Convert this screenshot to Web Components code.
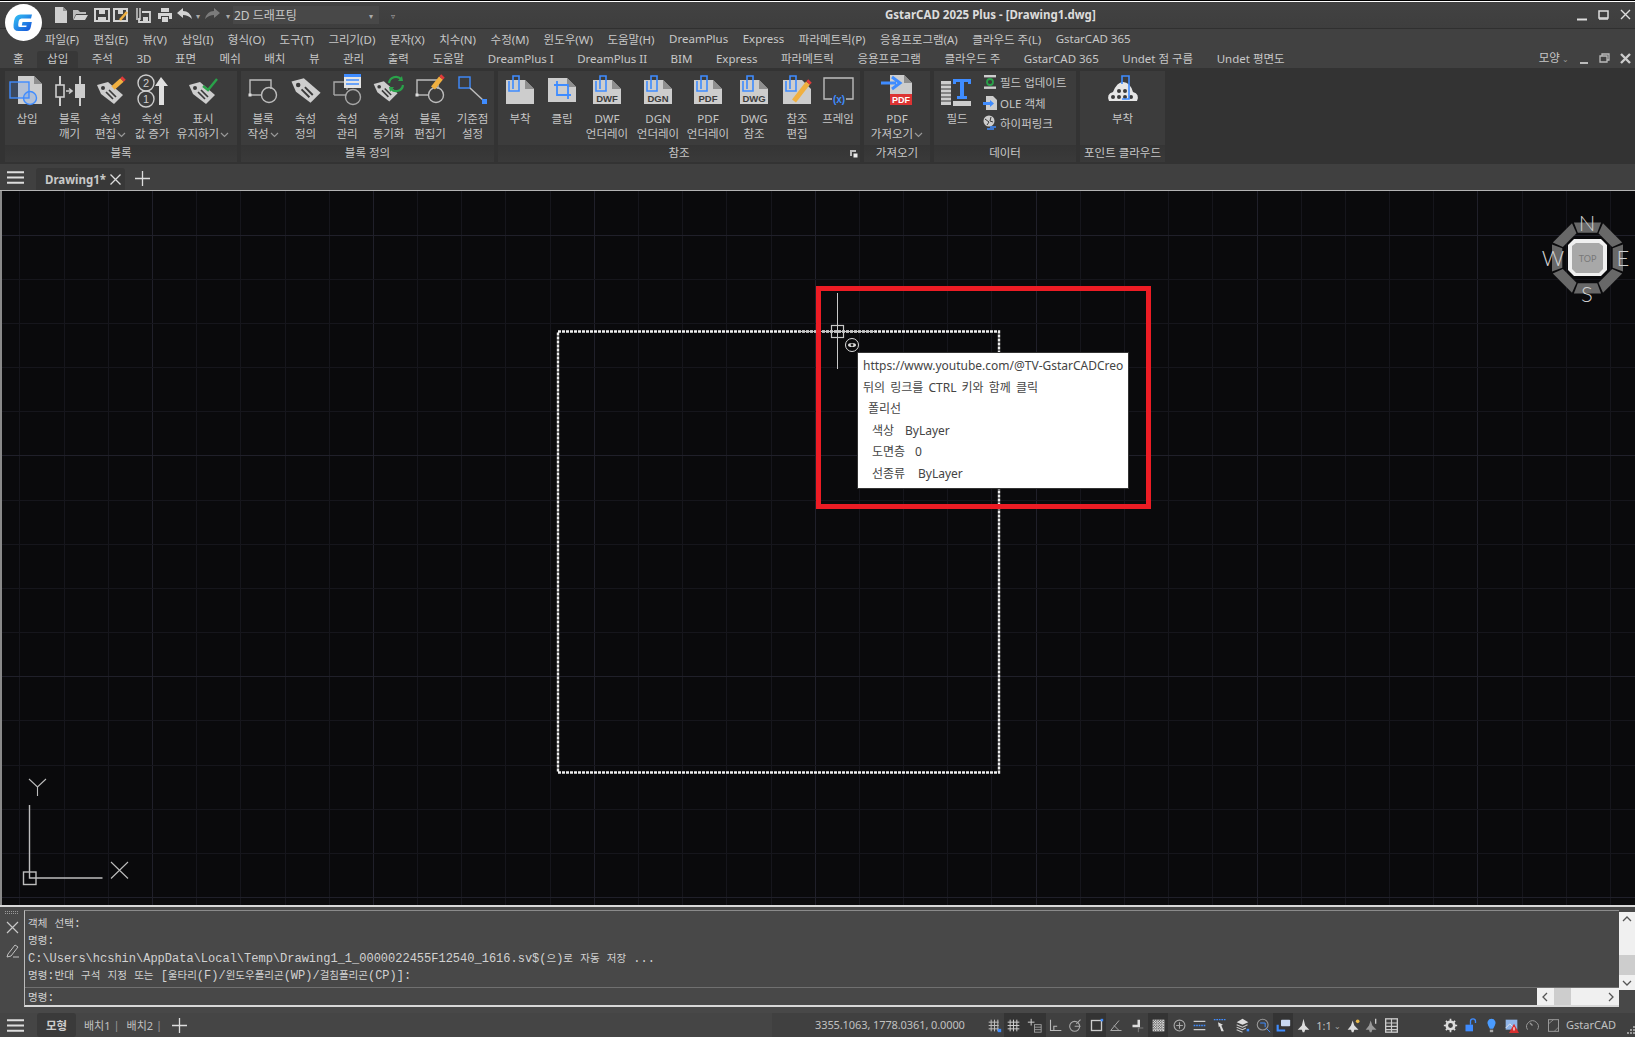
<!DOCTYPE html>
<html lang="ko">
<head>
<meta charset="utf-8">
<title>GstarCAD 2025 Plus</title>
<style>
html, body { margin: 0; height: 100%; background: #333; overflow: hidden; }
body { font: 12px "Noto Sans", "Noto Sans CJK KR", sans-serif; color: #c8c8c8; }
</style>
</head>
<body>
<cad-app>
  <cad-titlebar></cad-titlebar>
  <cad-menubar></cad-menubar>
  <cad-tabstrip></cad-tabstrip>
  <cad-ribbon>
    <rb-panel label="블록" w="232">
      <rb-tool icon="insert" w="44">삽입</rb-tool>
      <rb-tool icon="explode" w="41">블록<br>깨기</rb-tool>
      <rb-tool icon="tagpen" w="41" menu>속성<br>편집</rb-tool>
      <rb-tool icon="seq" w="42">속성<br>값 증가</rb-tool>
      <rb-tool icon="tagcheck" w="60" menu>표시<br>유지하기</rb-tool>
    </rb-panel>
    <rb-panel label="블록 정의" w="253">
      <rb-tool icon="block" w="44" menu>블록<br>작성</rb-tool>
      <rb-tool icon="tag" w="41">속성<br>정의</rb-tool>
      <rb-tool icon="attman" w="42">속성<br>관리</rb-tool>
      <rb-tool icon="tagsync" w="41">속성<br>동기화</rb-tool>
      <rb-tool icon="blockedit" w="42">블록<br>편집기</rb-tool>
      <rb-tool icon="base" w="43">기준점<br>설정</rb-tool>
    </rb-panel>
    <rb-panel label="참조" w="362" launcher>
      <rb-tool icon="attach" w="44">부착</rb-tool>
      <rb-tool icon="clip" w="40">클립</rb-tool>
      <rb-tool icon="dwf" w="50">DWF<br>언더레이</rb-tool>
      <rb-tool icon="dgn" w="52">DGN<br>언더레이</rb-tool>
      <rb-tool icon="pdfu" w="48">PDF<br>언더레이</rb-tool>
      <rb-tool icon="dwg" w="44">DWG<br>참조</rb-tool>
      <rb-tool icon="refedit" w="42">참조<br>편집</rb-tool>
      <rb-tool icon="frame" w="40">프레임</rb-tool>
    </rb-panel>
    <rb-panel label="가져오기" w="66">
      <rb-tool icon="pdfin" w="66" menu>PDF<br>가져오기</rb-tool>
    </rb-panel>
    <rb-panel label="데이터" w="142">
      <rb-tool icon="field" w="46">필드</rb-tool>
      <rb-stack>
        <rb-small icon="fieldup">필드 업데이트</rb-small>
        <rb-small icon="ole">OLE 객체</rb-small>
        <rb-small icon="link">하이퍼링크</rb-small>
      </rb-stack>
    </rb-panel>
    <rb-panel label="포인트 클라우드" w="85">
      <rb-tool icon="cloud" w="85">부착</rb-tool>
    </rb-panel>
  </cad-ribbon>
  <cad-docbar></cad-docbar>
  <cad-canvas>
    <cad-tooltip></cad-tooltip>
  </cad-canvas>
  <cad-command></cad-command>
  <cad-status></cad-status>
</cad-app>

<script>
const G = '#cdcdcd', B = '#3f8cff', D = '#3a3a3a'

// 리본 아이콘 조각
const page = `<path d="M4 8H23L32 17V32H4Z" fill="${G}"/><path d="M23 8V17H32Z" fill="#8f8f8f"/>`
const clip = `<path d="M11 17V4H17V19H7V9" fill="none" stroke="${B}" stroke-width="1.6"/>`
const tag = (sx = 1) => `<g transform="scale(${sx})"><path d="M4 13L15 10L30 23L21 32L8 22Z" fill="${G}"/><circle cx="10" cy="16" r="2" fill="${D}"/><path d="M13 20L20 27M16 18L23 25" stroke="${D}" stroke-width="1.7"/></g>`
const pencil = (x1, y1, x2, y2) => `<path d="M${x1} ${y1}L${x2} ${y2}" stroke="#f0b040" stroke-width="5"/><path d="M${x2} ${y2}l2 -2" stroke="#e03a3a" stroke-width="5"/>`
const docLabel = t => `<text x="18" y="29.5" font-size="${t.length > 3 ? 8 : 9.5}" font-weight="700" font-family="Liberation Sans" fill="#3c3c3c" text-anchor="middle">${t}</text>`
const blockShape = `<path d="M5 23V8H26V17" fill="none" stroke="#bdbdbd" stroke-width="1.4"/><path d="M5 23H17" stroke="#bdbdbd" stroke-width="1.4"/><circle cx="24" cy="23" r="7.5" fill="none" stroke="#bdbdbd" stroke-width="1.4"/><rect x="3.5" y="21.5" width="3" height="3" fill="#ddd"/>`

const ICON = {
  insert: `<path d="M9 4H25L33 12V32H9Z" fill="${G}"/><path d="M25 4V12H33Z" fill="#8f8f8f"/><rect x="1" y="10" width="19" height="16" fill="#3f8cff30" stroke="${B}" stroke-width="1.4"/><circle cx="21" cy="26" r="6.5" fill="#3f8cff30" stroke="${B}" stroke-width="1.4"/>`,
  explode: `<path d="M8 4V34M28 4V34" stroke="${G}" stroke-width="2"/><rect x="4" y="13" width="8" height="12" fill="#3a3a3a" stroke="${G}" stroke-width="1.6"/><rect x="23" y="12" width="10" height="14" fill="${G}"/><path d="M14 19H19M17 16.5L20 19L17 21.5" fill="none" stroke="${G}" stroke-width="1.6"/>`,
  tagpen: tag() + pencil(20, 16, 29, 8),
  seq: `<circle cx="12" cy="11" r="8" fill="none" stroke="${G}" stroke-width="1.4"/><circle cx="12" cy="27" r="8" fill="none" stroke="${G}" stroke-width="1.4"/><text x="12" y="15" font-size="11" font-family="Liberation Sans" fill="${G}" text-anchor="middle">2</text><text x="12" y="31" font-size="11" font-family="Liberation Sans" fill="${G}" text-anchor="middle">1</text><path d="M27 5L34 14H30V33H25V14H21Z" fill="#e0e0e0"/>`,
  tagcheck: tag() + `<path d="M18 14L23 18L32 7" fill="none" stroke="#2aa24a" stroke-width="2.4"/>`,
  block: blockShape,
  tag: `<g transform="translate(-1 -5) scale(1.12)">${tag()}</g>`,
  attman: `<path d="M5 23V10H18M18 18V15" fill="none" stroke="#a8a8a8" stroke-width="1.4"/><path d="M5 23H17" stroke="#a8a8a8" stroke-width="1.4"/><circle cx="24" cy="25" r="7.5" fill="none" stroke="#a8a8a8" stroke-width="1.4"/><rect x="15" y="2" width="17" height="14" fill="#e4e4e4"/><rect x="15" y="2" width="17" height="3" fill="${B}"/><path d="M17 8H30M17 12H30" stroke="${B}" stroke-width="1.4"/>`,
  tagsync: `<g transform="translate(-1 0) scale(.92)">${tag()}</g><path d="M18 11A7 7 0 0 1 30 7M32 13A7 7 0 0 1 20 17" fill="none" stroke="#2aa24a" stroke-width="2.2"/><path d="M27 9L32 9L31 4ZM23 15L18 15L19 20Z" fill="#2aa24a"/>`,
  blockedit: blockShape + pencil(21, 16, 29, 6),
  base: `<rect x="4" y="5" width="11" height="11" fill="none" stroke="${B}" stroke-width="1.4"/><path d="M15 16L29 29" stroke="#bdbdbd" stroke-width="1.5"/><rect x="27" y="27" width="5" height="5" fill="${B}"/>`,
  attach: page + clip,
  clip: `<path d="M4 6H23L32 15V30H4Z" fill="${G}"/><path d="M23 6V15H32Z" fill="#8f8f8f"/><path d="M10 13H24V27M13 9V23H27" fill="none" stroke="${B}" stroke-width="1.8"/>`,
  dwf: page + clip + docLabel('DWF'),
  dgn: page + clip + docLabel('DGN'),
  pdfu: page + clip + docLabel('PDF'),
  dwg: page + clip + docLabel('DWG'),
  refedit: page.replace('M23 8V17H32Z', 'M23 8V8Z') + clip + pencil(15, 29, 29, 11),
  frame: `<path d="M12 27H4V6H33V27H26" fill="none" stroke="#bdbdbd" stroke-width="1.4"/><text x="19" y="31" font-size="10" font-weight="700" font-family="Liberation Sans" fill="${B}" text-anchor="middle">(x)</text>`,
  pdfin: `<path d="M11 3H25L33 11V33H11Z" fill="${G}"/><path d="M25 3V11H33Z" fill="#8f8f8f"/><rect x="11" y="22" width="22" height="11" fill="#dd3333"/><text x="22" y="31" font-size="9" font-weight="700" font-family="Liberation Sans" fill="#fff" text-anchor="middle">PDF</text><path d="M2 11H17M13 5L21 11L13 17" fill="none" stroke="${B}" stroke-width="3"/>`,
  field: `<rect x="2" y="9" width="10" height="24" fill="${G}"/><path d="M2 13H12M2 17H12M2 21H12M2 25H12M2 29H12" stroke="${D}" stroke-width="1"/><path d="M14 7H32V12H29V10H25V24H28V27H18V24H21V10H17V12H14Z" fill="${B}"/><rect x="14" y="29" width="18" height="5" fill="${G}"/>`,
  cloud: `<path d="M4 29Q1 22 8 20Q12 10 18 10Q25 10 28 20Q35 22 32 29Z" fill="#e6e6e6"/><g fill="#3a3a3a"><circle cx="8" cy="25" r="2"/><circle cx="14" cy="25" r="2"/><circle cx="20" cy="25" r="2"/><circle cx="26" cy="25" r="2"/><circle cx="14" cy="19" r="2"/><circle cx="20" cy="19" r="2"/></g><path d="M17 12V4H24V27H17" fill="none" stroke="${B}" stroke-width="1.6"/>`,
  // 작은 아이콘 (16)
  fieldup: `<rect x="2" y="1" width="12" height="2.4" fill="${G}"/><rect x="2" y="12.5" width="12" height="2.4" fill="${G}"/><circle cx="8" cy="8" r="3" fill="none" stroke="#2aa24a" stroke-width="1.8"/>`,
  ole: `<path d="M4 1H11L15 5V15H4Z" fill="${G}"/><path d="M1 7H8V5L12 8.5L8 12V10H1Z" fill="${B}"/>`,
  link: `<circle cx="7" cy="6" r="5.5" fill="${G}"/><path d="M3 4L7 7L5 10M9 2L8 6L11 7" stroke="${D}" fill="none"/><path d="M5 14H12M8 12H14" stroke="${B}" stroke-width="1.4"/>`,
  // 빠른 실행 도구모음 (16)
  qnew: `<path d="M2 0H10L14 4V16H2Z" fill="#cfcfcf"/><path d="M10 0V4H14Z" fill="#8f8f8f"/>`,
  qopen: `<path d="M1 3H6L8 5H14V7H4L1 13Z" fill="#bdbdbd"/><path d="M4 8H16L13 13H1.5Z" fill="#d4d4d4"/>`,
  qsave: `<path d="M1 2H15V14H1Z" fill="none" stroke="#d4d4d4" stroke-width="2"/><path d="M5 2V7H11V2M4 14V10H12V14" fill="#d4d4d4"/>`,
  qsaveas: `<path d="M1 2H14V14H1Z" fill="none" stroke="#d4d4d4" stroke-width="2"/><path d="M5 2V7H10V2" fill="#d4d4d4"/><path d="M7 13L14 5" stroke="#f0b040" stroke-width="2.6"/>`,
  qsaveall: `<path d="M2 1V13M5 1V13" stroke="#d4d4d4" stroke-width="1.4"/><path d="M7 5H15V15H4V11" fill="none" stroke="#d4d4d4" stroke-width="1.8"/><path d="M8 10H13V15H8Z" fill="#d4d4d4"/>`,
  qprint: `<path d="M4 1H12V5H4Z" fill="#d4d4d4"/><path d="M1 6H15V12H12V9H4V12H1Z" fill="#d4d4d4"/><path d="M5 10H11V15H5Z" fill="#d4d4d4"/>`,
  qundo: `<path d="M1 6L7 1V4Q14 4 16 12Q12 8 7 8V11Z" fill="#d4d4d4"/>`,
  qredo: `<path d="M15 6L9 1V4Q2 4 0 12Q4 8 9 8V11Z" fill="#7b7b7b"/>`,
  // 상태 표시줄 (18)
  sgridsnap: `<path d="M2 5H14M2 9H14M2 13H14M5 2V16M9 2V16M13 2V16" stroke="#bbb" stroke-width="1.2"/><rect x="13" y="13" width="4" height="4" fill="${B}"/>`,
  sgrid: `<path d="M2 5H16M2 9H16M2 13H16M5 2V16M9 2V16M13 2V16" stroke="#ccc" stroke-width="1.2"/>`,
  sinfer: `<path d="M1 5H9M5 1V9" stroke="#ccc" stroke-width="1.2"/><rect x="9" y="8" width="8" height="9" fill="none" stroke="#aaa"/><path d="M9 11H17M9 14H17" stroke="#aaa"/>`,
  sortho: `<path d="M3 2V15H16M7 15V10H11" fill="none" stroke="#bbb" stroke-width="1.3"/>`,
  spolar: `<circle cx="8" cy="10" r="6" fill="none" stroke="#aaa" stroke-width="1.3"/><path d="M8 10H15M10 7L15 2" stroke="#aaa" stroke-width="1.3"/>`,
  sosnap: `<rect x="3" y="3" width="12" height="12" fill="none" stroke="#ccc" stroke-width="1.6"/><rect x="14" y="1" width="3" height="3" fill="${B}"/>`,
  sotrack: `<path d="M2 15H15M2 15L12 3M6 9L12 15" stroke="#aaa" stroke-width="1.2" fill="none"/>`,
  sdyn: `<path d="M3 8H9V2H12V11H3Z" fill="#ddd"/><path d="M10 17V12H16" fill="none" stroke="#888"/>`,
  strans: `<rect x="2" y="2" width="14" height="14" fill="#ddd"/><path d="M2 4H16M2 7H16M2 10H16M2 13H16M4 2V16M7 2V16M10 2V16M13 2V16" stroke="#333" stroke-dasharray="1.5 1.5"/>`,
  sqp: `<circle cx="9" cy="9" r="6.5" fill="none" stroke="#aaa" stroke-width="1.3"/><path d="M5 9H13M9 5V13" stroke="#aaa" stroke-width="1.3" transform="rotate(0 9 9)"/>`,
  slw: `<path d="M2 4H16M2 14H16" stroke="#ccc" stroke-width="1.6"/><path d="M2 9H16" stroke="${B}" stroke-width="1.6" stroke-dasharray="2 1"/>`,
  ssel: `<path d="M1 2H16" stroke="${B}" stroke-width="1.4" stroke-dasharray="2 1"/><path d="M6 5L12 8L10 9L13 16L10 16L8 10L7 11Z" fill="#ddd"/>`,
  slay: `<path d="M9 1L16 5L9 8L2 5Z" fill="#ddd"/><path d="M2 8L9 11L15 8M2 11L9 14L13 12M2 14L9 17" fill="none" stroke="#ccc" stroke-width="1.3"/><rect x="14" y="13" width="3" height="3" fill="${B}"/>`,
  szoom: `<circle cx="8" cy="8" r="6.5" fill="none" stroke="#999" stroke-width="1.3"/><path d="M5 6H11V11M13 13L17 17" stroke="${B}" fill="none" stroke-width="1.2"/>`,
  swin: `<rect x="6" y="2" width="11" height="8" rx="1" fill="#c8d8f0"/><path d="M2 8V15H11" fill="none" stroke="${B}" stroke-width="2.6"/>`,
  sann: `<path d="M9 1L11 9L16 14H11L10 17H8L7 14H2L7 9Z" fill="#ddd"/>`,
  sann2: `<path d="M8 3L10 9L15 14H10L9 17H7L6 14H2L6 9Z" fill="#ddd"/><circle cx="14" cy="4" r="2.2" fill="#e8b84a"/>`,
  sann3: `<path d="M8 3L10 9L15 14H10L9 17H7L6 14H2L6 9Z" fill="#999"/><path d="M14 1V7" stroke="#ccc" stroke-width="1.6"/>`,
  stable: `<rect x="2" y="1" width="14" height="16" fill="none" stroke="#ccc" stroke-width="1.6"/><path d="M2 6H16M2 10H16M2 14H16M9 1V17" stroke="#ccc" stroke-width="1.4"/>`,
  sgear: `<circle cx="9" cy="9" r="4.5" fill="none" stroke="#ddd" stroke-width="3.2"/><path d="M9 1V4M9 14V17M1 9H4M14 9H17M3.5 3.5L5.5 5.5M12.5 12.5L14.5 14.5M3.5 14.5L5.5 12.5M12.5 5.5L14.5 3.5" stroke="#ddd" stroke-width="2"/>`,
  slock: `<rect x="3" y="8" width="9" height="8" fill="${B}"/><path d="M9 8V4A3 3 0 0 1 15 4V6" fill="none" stroke="${B}" stroke-width="1.6"/>`,
  sbulb: `<path d="M9 1A5 5 0 0 1 13 9L11 13H7L5 9A5 5 0 0 1 9 1Z" fill="#4a9cff"/><rect x="7" y="14" width="4" height="3" fill="#aaa"/>`,
  swarn: `<rect x="2" y="2" width="14" height="12" fill="#8fb4e8"/><path d="M2 12L7 7L11 11" fill="none" stroke="#eee"/><path d="M12 7L18 18H6Z" fill="#d83030"/><path d="M12 11V15" stroke="#fff" stroke-width="1.4"/>`,
  sperf: `<path d="M3 14A7 7 0 1 1 15 14" fill="none" stroke="#999" stroke-width="1.2"/><path d="M9 9L6 6" stroke="#999" stroke-width="1.4"/>`,
  sclean: `<rect x="3" y="2" width="12" height="14" fill="none" stroke="#999" stroke-width="1.2"/><path d="M3 7L9 2M10 16L15 11" stroke="#999"/>`
}

class CadIcon extends HTMLElement {
  constructor() {
    super()
    this.attachShadow({mode: 'open'})
  }
  connectedCallback() {
    const box = this.getAttribute('box') || 36
    const size = this.getAttribute('size') || box
    this.shadowRoot.innerHTML = `
      <style>
      :host { display: block; width: ${size}px; height: ${size}px; flex: none; }
      svg { display: block; overflow: visible; }
      </style>
      <svg width="${size}" height="${size}" viewBox="0 0 ${box} ${box}">${ICON[this.getAttribute('name')] || ''}</svg>`
  }
}
customElements.define('cad-icon', CadIcon)

class CadApp extends HTMLElement {
  constructor() {
    super()
    this.attachShadow({mode: 'open'}).innerHTML = `
      <style>
      :host { display: flex; flex-direction: column; width: 1635px; height: 1037px; border-top: 1px solid #000; box-sizing: border-box; position: relative; }
      .edge { height: 1px; background: #fff; flex: none; }
      .logo { position: absolute; left: 5px; top: 3px; width: 37px; height: 37px; }
      </style>
      <div class="edge"></div>
      <slot></slot>
      <svg class="logo" viewBox="0 0 37 37">
        <defs><linearGradient id="lg" x1="0" y1="0" x2="1" y2="1"><stop offset="0" stop-color="#35c4f5"/><stop offset="1" stop-color="#1450d8"/></linearGradient></defs>
        <circle cx="18.5" cy="18.5" r="18.5" fill="#fff"/>
        <path d="M27 10.5H15.5Q10 10.5 9 17L8.5 21Q8 27 13.5 27H21.5Q25 27 25.8 23L26.8 18H17.5L16.8 21.5H21.6L21.3 23H14.8Q12.8 23 13.2 20.5L13.7 17Q14.2 14.5 16.5 14.5H26Z" fill="url(#lg)"/>
      </svg>`
  }
}
customElements.define('cad-app', CadApp)

class CadTitlebar extends HTMLElement {
  constructor() {
    super()
    const qat = [['qnew', 53, 16], ['qopen', 72, 16], ['qsave', 94, 16], ['qsaveas', 113, 16], ['qsaveall', 135, 16], ['qprint', 157, 16], ['qundo', 176, 16]]
    let x = 0
    const icons = qat.map(([n, l, s]) => { const m = l - x; x = l + s; return `<cad-icon name="${n}" box="16" size="${s}" style="margin-left:${m}px"></cad-icon>` }).join('')
    this.attachShadow({mode: 'open'}).innerHTML = `
      <style>
      :host { display: flex; align-items: center; height: 26px; background: linear-gradient(#424242, #3e3e3e); border-bottom: 1px solid #303030; flex: none; position: relative; }
      .drop { width: 146px; height: 18px; margin-left: 7px; background: #484848; display: flex; align-items: center; justify-content: space-between; box-sizing: border-box; padding: 0 6px 0 1px; color: #c8c8c8; font-size: 12px; }
      .tri { color: #aaa; font-size: 8px; }
      .title { position: absolute; left: 885px; top: 4px; font-weight: 700; font-size: 11.5px; color: #dcdcdc; white-space: nowrap; line-height: 18px; }
      .win { position: absolute; right: 4px; top: 0; height: 26px; display: flex; align-items: center; gap: 11px; }
      </style>
      ${icons}
      <span class="tri" style="margin-left:4px">▾</span>
      <cad-icon name="qredo" box="16" size="16" style="margin-left:5px"></cad-icon>
      <span class="tri" style="margin-left:5px">▾</span>
      <div class="drop" style="margin-left:3px"><span>2D 드래프팅</span><span class="tri">▾</span></div>
      <span class="tri" style="margin-left:12px">▿</span>
      <div class="title">GstarCAD 2025 Plus - [Drawing1.dwg]</div>
      <div class="win">
        <svg width="10" height="12"><path d="M0 10.5H10" stroke="#ddd" stroke-width="2"/></svg>
        <svg width="11" height="12"><path d="M1 2H10V9H1Z" fill="none" stroke="#ddd" stroke-width="1.5"/><path d="M1 10H10" stroke="#ddd" stroke-width="1.5"/></svg>
        <svg width="11" height="12"><path d="M1 1L10 10M10 1L1 10" stroke="#ddd" stroke-width="1.4"/></svg>
      </div>`
  }
}
customElements.define('cad-titlebar', CadTitlebar)

class CadMenubar extends HTMLElement {
  constructor() {
    super()
    const items = ['파일(F)', '편집(E)', '뷰(V)', '삽입(I)', '형식(O)', '도구(T)', '그리기(D)', '문자(X)', '치수(N)', '수정(M)', '윈도우(W)', '도움말(H)', 'DreamPlus', 'Express', '파라메트릭(P)', '응용프로그램(A)', '클라우드 주(L)', 'GstarCAD 365']
    this.attachShadow({mode: 'open'}).innerHTML = `
      <style>
      :host { display: flex; align-items: center; gap: 14.5px; height: 19px; padding-left: 45px; background: #414141; flex: none; font-size: 11.5px; color: #c8c8c8; white-space: nowrap; }
      </style>
      ${items.map(t => `<span>${t}</span>`).join('')}`
  }
}
customElements.define('cad-menubar', CadMenubar)

class CadTabstrip extends HTMLElement {
  constructor() {
    super()
    const items = ['홈', '삽입', '주석', '3D', '표면', '메쉬', '배치', '뷰', '관리', '출력', '도움말', 'DreamPlus I', 'DreamPlus II', 'BIM', 'Express', '파라메트릭', '응용프로그램', '클라우드 주', 'GstarCAD 365', 'Undet 점 구름', 'Undet 평면도']
    this.attachShadow({mode: 'open'}).innerHTML = `
      <style>
      :host { display: flex; align-items: flex-end; height: 20px; padding-left: 3px; background: #414141; flex: none; font-size: 11.5px; color: #c8c8c8; white-space: nowrap; }
      span { display: block; height: 17px; line-height: 16px; padding: 0 10px; margin-right: 3.5px; box-sizing: border-box; }
      .on { background: #383838; border-radius: 3px 3px 0 0; }
      .right { margin-left: auto; display: flex; align-items: center; height: 20px; gap: 10px; padding-right: 4px; }
      .right span { padding: 0; margin: 0; }
      </style>
      ${items.map((t, i) => `<span class="${i == 1 ? 'on' : ''}">${t}</span>`).join('')}
      <div class="right">
        <span>모양<small style="font-size:8px;color:#999"> ⌄</small></span>
        <svg width="10" height="12"><path d="M1 11H9" stroke="#bbb" stroke-width="2"/></svg>
        <svg width="11" height="12"><path d="M1 4H8V10H1ZM3 4V2H10V8H8" fill="none" stroke="#bbb" stroke-width="1.3"/></svg>
        <svg width="11" height="12"><path d="M1 2L10 11M10 2L1 11" stroke="#ccc" stroke-width="2.4"/></svg>
      </div>`
  }
}
customElements.define('cad-tabstrip', CadTabstrip)

class CadRibbon extends HTMLElement {
  constructor() {
    super()
    this.attachShadow({mode: 'open'}).innerHTML = `
      <style>
      :host { display: flex; gap: 4px; height: 96px; box-sizing: border-box; padding: 3px 0 2px 5px; background: #333; flex: none; }
      </style>
      <slot></slot>`
  }
}
customElements.define('cad-ribbon', CadRibbon)

class RbPanel extends HTMLElement {
  constructor() {
    super()
    this.attachShadow({mode: 'open'})
  }
  connectedCallback() {
    const launcher = this.hasAttribute('launcher') ? `<svg class="lau" width="9" height="9"><path d="M1 1H7V3H3V7H1Z" fill="#bbb"/><rect x="4.5" y="4.5" width="4" height="4" fill="#eee"/></svg>` : ''
    this.shadowRoot.innerHTML = `
      <style>
      :host { display: flex; flex-direction: column; width: ${this.getAttribute('w')}px; flex: none; background: #3c3c3c; }
      .body { display: flex; flex: 1; min-height: 0; }
      .label { position: relative; height: 17px; line-height: 16px; background: linear-gradient(#353535, #3a3a3a); text-align: center; font-size: 11.5px; color: #c8c8c8; white-space: nowrap; }
      .lau { position: absolute; right: 2px; top: 4px; }
      </style>
      <div class="body"><slot></slot></div>
      <div class="label">${this.getAttribute('label')}${launcher}</div>`
  }
}
customElements.define('rb-panel', RbPanel)

class RbTool extends HTMLElement {
  constructor() {
    super()
    this.attachShadow({mode: 'open'})
  }
  connectedCallback() {
    const chev = this.hasAttribute('menu') ? `<svg width="9" height="6" style="margin-left:1px"><path d="M1 1L4.5 4.5L8 1" fill="none" stroke="#999" stroke-width="1.2"/></svg>` : ''
    this.shadowRoot.innerHTML = `
      <style>
      :host { display: flex; flex-direction: column; align-items: center; width: ${this.getAttribute('w')}px; flex: none; padding-top: 1px; }
      .t { margin-top: 3px; text-align: center; line-height: 15px; font-size: 11.5px; color: #c6c6c6; white-space: nowrap; }
      </style>
      <cad-icon name="${this.getAttribute('icon')}"></cad-icon>
      <div class="t"><slot></slot>${chev}</div>`
  }
}
customElements.define('rb-tool', RbTool)

class RbStack extends HTMLElement {
  constructor() {
    super()
    this.attachShadow({mode: 'open'}).innerHTML = `
      <style>
      :host { display: flex; flex-direction: column; gap: 4.5px; padding: 3px 0 0 2px; }
      </style>
      <slot></slot>`
  }
}
customElements.define('rb-stack', RbStack)

class RbSmall extends HTMLElement {
  constructor() {
    super()
    this.attachShadow({mode: 'open'})
  }
  connectedCallback() {
    this.shadowRoot.innerHTML = `
      <style>
      :host { display: flex; align-items: center; gap: 2px; height: 16px; font-size: 11.5px; color: #c6c6c6; white-space: nowrap; }
      </style>
      <cad-icon name="${this.getAttribute('icon')}" box="16" size="16"></cad-icon><slot></slot>`
  }
}
customElements.define('rb-small', RbSmall)

class CadDocbar extends HTMLElement {
  constructor() {
    super()
    this.attachShadow({mode: 'open'}).innerHTML = `
      <style>
      :host { display: flex; align-items: flex-end; height: 27px; box-sizing: border-box; background: #404040; border-bottom: 1px solid #b4b4b4; flex: none; }
      .burger { margin: 0 12px 6px 7px; }
      .tab { display: flex; align-items: center; justify-content: space-between; width: 89px; height: 22px; box-sizing: border-box; padding: 0 4px 0 9px; background: #383838; border-radius: 3px 3px 0 0; font-weight: 700; font-size: 11.5px; color: #c8c8c8; }
      .plus { margin: 0 0 4px 10px; }
      </style>
      <svg class="burger" width="17" height="13"><path d="M0 1.2H17M0 6.5H17M0 11.8H17" stroke="#ddd" stroke-width="2"/></svg>
      <div class="tab"><span>Drawing1*</span><svg width="11" height="11"><path d="M0.5 0.5L10.5 10.5M10.5 0.5L0.5 10.5" stroke="#ddd" stroke-width="1.3"/></svg></div>
      <svg class="plus" width="15" height="15"><path d="M7.5 0V15M0 7.5H15" stroke="#ddd" stroke-width="1.3"/></svg>`
  }
}
customElements.define('cad-docbar', CadDocbar)

class CadCanvas extends HTMLElement {
  constructor() {
    super()
    let grid = ''
    for (let i = -3; i < 34; i++) {
      const x = Math.round(152 + i * 44.18), major = i % 5 == 0
      grid += `<path d="M${x + .5} 191V905" stroke="${major ? '#20202a' : '#16161c'}"/>`
    }
    for (let i = -1; i < 17; i++) {
      const y = Math.round(234.5 + i * 44.18), major = i % 5 == 0
      grid += `<path d="M0 ${y + .5}H1635" stroke="${major ? '#20202a' : '#16161c'}"/>`
    }
    // 뷰큐브 링
    let ring = ''
    const cx = 1587.5, cy = 258
    for (let k = 0; k < 8; k++) {
      const a = (k * 45 - 22.5 - 90 + 1.5) * Math.PI / 180, c = (k * 45 + 22.5 - 90 - 1.5) * Math.PI / 180
      const pt = (r, t) => `${(cx + r * Math.cos(t)).toFixed(1)},${(cy + r * Math.sin(t)).toFixed(1)}`
      ring += `<polygon points="${pt(38, a)} ${pt(38, c)} ${pt(27, c)} ${pt(27, a)}" fill="#686868"/>`
    }
    this.attachShadow({mode: 'open'}).innerHTML = `
      <style>
      :host { display: block; position: relative; height: 714px; background: #0a0a0c; flex: none; overflow: hidden; }
      svg { position: absolute; left: 0; top: 0; }
      .mark { position: absolute; left: 816px; top: 95px; width: 335px; height: 223px; box-sizing: border-box; border: 5px solid #ed1c24; }
      text { font-family: "Lato", "Open Sans", sans-serif; }
      </style>
      <svg width="1635" height="714" viewBox="0 191 1635 714">
        <g shape-rendering="crispEdges">${grid}</g>
        <path d="M1 191V905" stroke="#8a8a8a" stroke-width="2"/>
        <rect x="558" y="331.5" width="441" height="441" fill="none" stroke="#eee" stroke-width="2.4" stroke-dasharray="3 1"/>
        <g stroke="#c8c8c8" fill="none">
          <path d="M837.5 293V369M799 331.5H875"/>
          <rect x="831.5" y="325.5" width="12" height="12" stroke-width="1.2"/>
          <circle cx="852" cy="345" r="6.5" stroke="#ddd"/>
          <ellipse cx="852" cy="345" rx="4" ry="2" fill="#ddd" stroke="none"/>
          <circle cx="852" cy="345" r="1.4" fill="#222" stroke="none"/>
        </g>
        <g stroke="#bdbdbd" fill="none" stroke-width="1.4">
          <path d="M29.5 805V878H102.5"/>
          <rect x="23.5" y="872" width="12.5" height="12.5"/>
          <path d="M111 862L128 878.5M128 862L111 878.5" stroke-width="1.1"/>
          <path d="M29 779L37.5 787L46 779M37.5 787V796" stroke-width="1.1"/>
        </g>
        ${ring}
        <polygon points="1568,245 1574,239 1601,239 1607,245 1607,270 1601,276 1574,276 1568,270" fill="#f0f0f0"/>
        <polygon points="1572,246 1576,243 1599,243 1603,246 1603,269 1599,273 1576,273 1572,269" fill="#a8a8a8"/>
        <text x="1587.5" y="262" font-size="9" fill="#787878" text-anchor="middle">TOP</text>
        <g fill="#cfcfcf" font-size="22" font-weight="300" text-anchor="middle">
          <text x="1587" y="231">N</text>
          <text x="1623" y="266">E</text>
          <text x="1587" y="302">S</text>
          <text x="1553" y="266">W</text>
        </g>
      </svg>
      <slot></slot>
      <div class="mark"></div>`
  }
}
customElements.define('cad-canvas', CadCanvas)

class CadTooltip extends HTMLElement {
  constructor() {
    super()
    this.attachShadow({mode: 'open'}).innerHTML = `
      <style>
      :host { display: block; position: absolute; left: 857px; top: 161px; width: 272px; height: 137px; box-sizing: border-box; padding: 2px 0 0 5px; background: #fff; border: 1px solid #333; color: #444; font-size: 12px; line-height: 21.5px; white-space: nowrap; z-index: 1; }
      .a { padding-left: 5px; }
      .b { padding-left: 9px; }
      .b span { display: inline-block; }
      </style>
      <div>https://www.youtube.com/@TV-GstarCADCreo</div>
      <div style="word-spacing:2px">뒤의 링크를 CTRL 키와 함께 클릭</div>
      <div class="a">폴리선</div>
      <div class="b"><span style="width:33px">색상</span>ByLayer</div>
      <div class="b"><span style="width:43px">도면층</span>0</div>
      <div class="b"><span style="width:46px">선종류</span>ByLayer</div>`
  }
}
customElements.define('cad-tooltip', CadTooltip)

class CadCommand extends HTMLElement {
  constructor() {
    super()
    const k = s => s.replace(/[가-힣]+/g, m => `<span class="k">${m}</span>`)
    const lines = ['객체가 1 개 있음', '객체 선택:', '명령:', 'C:\\Users\\hcshin\\AppData\\Local\\Temp\\Drawing1_1_0000022455F12540_1616.sv$(으)로 자동 저장 ...', '명령:반대 구석 지정 또는 [울타리(F)/윈도우폴리곤(WP)/걸침폴리곤(CP)]:']
    this.attachShadow({mode: 'open'}).innerHTML = `
      <style>
      :host { display: flex; height: 108px; box-sizing: border-box; border-top: 2px solid #d8d8d8; background: #484848; flex: none; font: 12px "Liberation Mono", "Noto Sans CJK KR", monospace; color: #d2d2d2; }
      .side { width: 24px; flex: none; display: flex; flex-direction: column; align-items: center; gap: 7px; padding-top: 4px; }
      .frame { flex: 1; min-width: 0; display: flex; flex-direction: column; height: 97px; margin-top: 3px; box-sizing: border-box; border-left: 1px solid #bbb; border-top: 1px solid #8a8a8a; border-bottom: 2px solid #d8d8d8; }
      .log { flex: 1; min-height: 0; overflow: hidden; display: flex; flex-direction: column; justify-content: flex-end; padding: 0 0 1.5px 3px; border-bottom: 1px solid #707070; }
      .log div { line-height: 17.5px; height: 17.5px; flex: none; white-space: pre; }
      .k { font-size: 10.5px; }
      .inp { display: flex; height: 17px; flex: none; align-items: center; padding-left: 3px; }
      .inp span.t { flex: 1; }
      .hs { width: 82px; height: 17px; background: #f0f0f0; display: flex; align-items: center; justify-content: space-between; padding: 0 5px; box-sizing: border-box; position: relative; }
      .hs i { position: absolute; left: 17px; top: 0; width: 17px; height: 17px; background: #cdcdcd; }
      .vs { width: 16px; flex: none; height: 78px; margin-top: 5px; background: #f0f0f0; position: relative; display: flex; flex-direction: column; align-items: center; justify-content: space-between; padding: 4px 0; box-sizing: border-box; }
      .vs i { position: absolute; left: 0; top: 43px; width: 16px; height: 20px; background: #cdcdcd; }
      </style>
      <div class="side">
        <svg width="14" height="3"><path d="M0 .5H14M0 2.5H14" stroke="#999" stroke-dasharray="1 1"/></svg>
        <svg width="13" height="13"><path d="M1 1L12 12M12 1L1 12" stroke="#c8c8c8" stroke-width="1.2"/></svg>
        <svg width="13" height="15" style="margin-top:2px"><path d="M2 11L9 2L12 4L5 13L1 14ZM7 14H13" fill="none" stroke="#c0c0c0"/></svg>
      </div>
      <div class="frame">
        <div class="log">${lines.map(l => `<div>${k(l)}</div>`).join('')}</div>
        <div class="inp"><span class="t">${k('명령:')}</span>
          <div class="hs"><svg width="6" height="10"><path d="M5 1L1 5L5 9" fill="none" stroke="#555" stroke-width="1.3"/></svg><i></i><svg width="6" height="10"><path d="M1 1L5 5L1 9" fill="none" stroke="#555" stroke-width="1.3"/></svg></div>
        </div>
      </div>
      <div class="vs"><svg width="10" height="6"><path d="M1 5L5 1L9 5" fill="none" stroke="#555" stroke-width="1.3"/></svg><i></i><svg width="10" height="6"><path d="M1 1L5 5L9 1" fill="none" stroke="#555" stroke-width="1.3"/></svg></div>`
  }
}
customElements.define('cad-command', CadCommand)

class CadStatus extends HTMLElement {
  constructor() {
    super()
    const cells = [['sgridsnap', 19], ['sgrid', 19, 1], ['sinfer', 23, 1], ['sortho', 19], ['spolar', 21], ['sosnap', 20, 1], ['sotrack', 21], ['sdyn', 21], ['strans', 20, 1], ['sqp', 22], ['slw', 19], ['ssel', 23], ['slay', 21], ['szoom', 20], ['swin', 20, 1], ['sann', 20]]
    const cells2 = [['sann2', 18], ['sann3', 18], ['stable', 22]]
    const cells3 = [['sgear', 20], ['slock', 21], ['sbulb', 20], ['swarn', 21], ['sperf', 21], ['sclean', 21]]
    const draw = a => a.map(([n, w, on]) => `<div class="c${on ? ' on' : ''}" style="width:${w}px"><cad-icon name="${n}" box="18" size="15"></cad-icon></div>`).join('')
    this.attachShadow({mode: 'open'}).innerHTML = `
      <style>
      :host { display: flex; align-items: stretch; height: 24px; background: #404040; flex: none; font-size: 11px; color: #c0c0c0; white-space: nowrap; }
      .left { width: 772px; flex: none; background: #454545; display: flex; align-items: center; }
      .burger { margin: 0 13px 0 7px; }
      .tab { height: 24px; display: flex; align-items: center; padding: 0 9px; width: 39px; box-sizing: border-box; background: #3a3a3a; border-radius: 3px; font-size: 11.5px; font-weight: 700; justify-content: center; margin-right: 8px; color: #ccc; }
      .lay { margin-right: 16px; position: relative; }
      .lay::after { content: '|'; position: absolute; right: -9px; top: 0; color: #999; }
      .plus { margin-left: 3px; }
      .xyz { margin-left: 43px; width: 170px; line-height: 24px; font-size: 11px; letter-spacing: -.1px; }
      .c { display: flex; align-items: center; justify-content: center; flex: none; height: 24px; }
      .c.on { background: #343434; }
      .scale { width: 31px; display: flex; align-items: center; justify-content: center; gap: 2px; }
      .scale small { font-size: 8px; color: #aaa; }
      .gap { width: 38px; }
      .name { margin-left: 2px; line-height: 24px; }
      .grip { margin-left: 9px; align-self: flex-end; margin-bottom: 2px; }
      </style>
      <div class="left">
        <svg class="burger" width="17" height="13"><path d="M0 1.2H17M0 6.5H17M0 11.8H17" stroke="#ddd" stroke-width="2"/></svg>
        <div class="tab">모형</div>
        <span class="lay">배치1</span><span class="lay">배치2</span>
        <svg class="plus" width="15" height="15"><path d="M7.5 0V15M0 7.5H15" stroke="#ddd" stroke-width="1.3"/></svg>
      </div>
      <div class="xyz">3355.1063, 1778.0361, 0.0000</div>
      ${draw(cells)}
      <div class="scale">1:1<small>⌄</small></div>
      ${draw(cells2)}
      <div class="gap"></div>
      ${draw(cells3)}
      <div class="name">GstarCAD</div>
      <svg class="grip" width="10" height="10"><path d="M8 1h2v2H8zM5 4h2v2H5zM8 4h2v2H8zM2 7h2v2H2zM5 7h2v2H5zM8 7h2v2H8z" fill="#999"/></svg>`
  }
}
customElements.define('cad-status', CadStatus)
</script>
</body>
</html>
